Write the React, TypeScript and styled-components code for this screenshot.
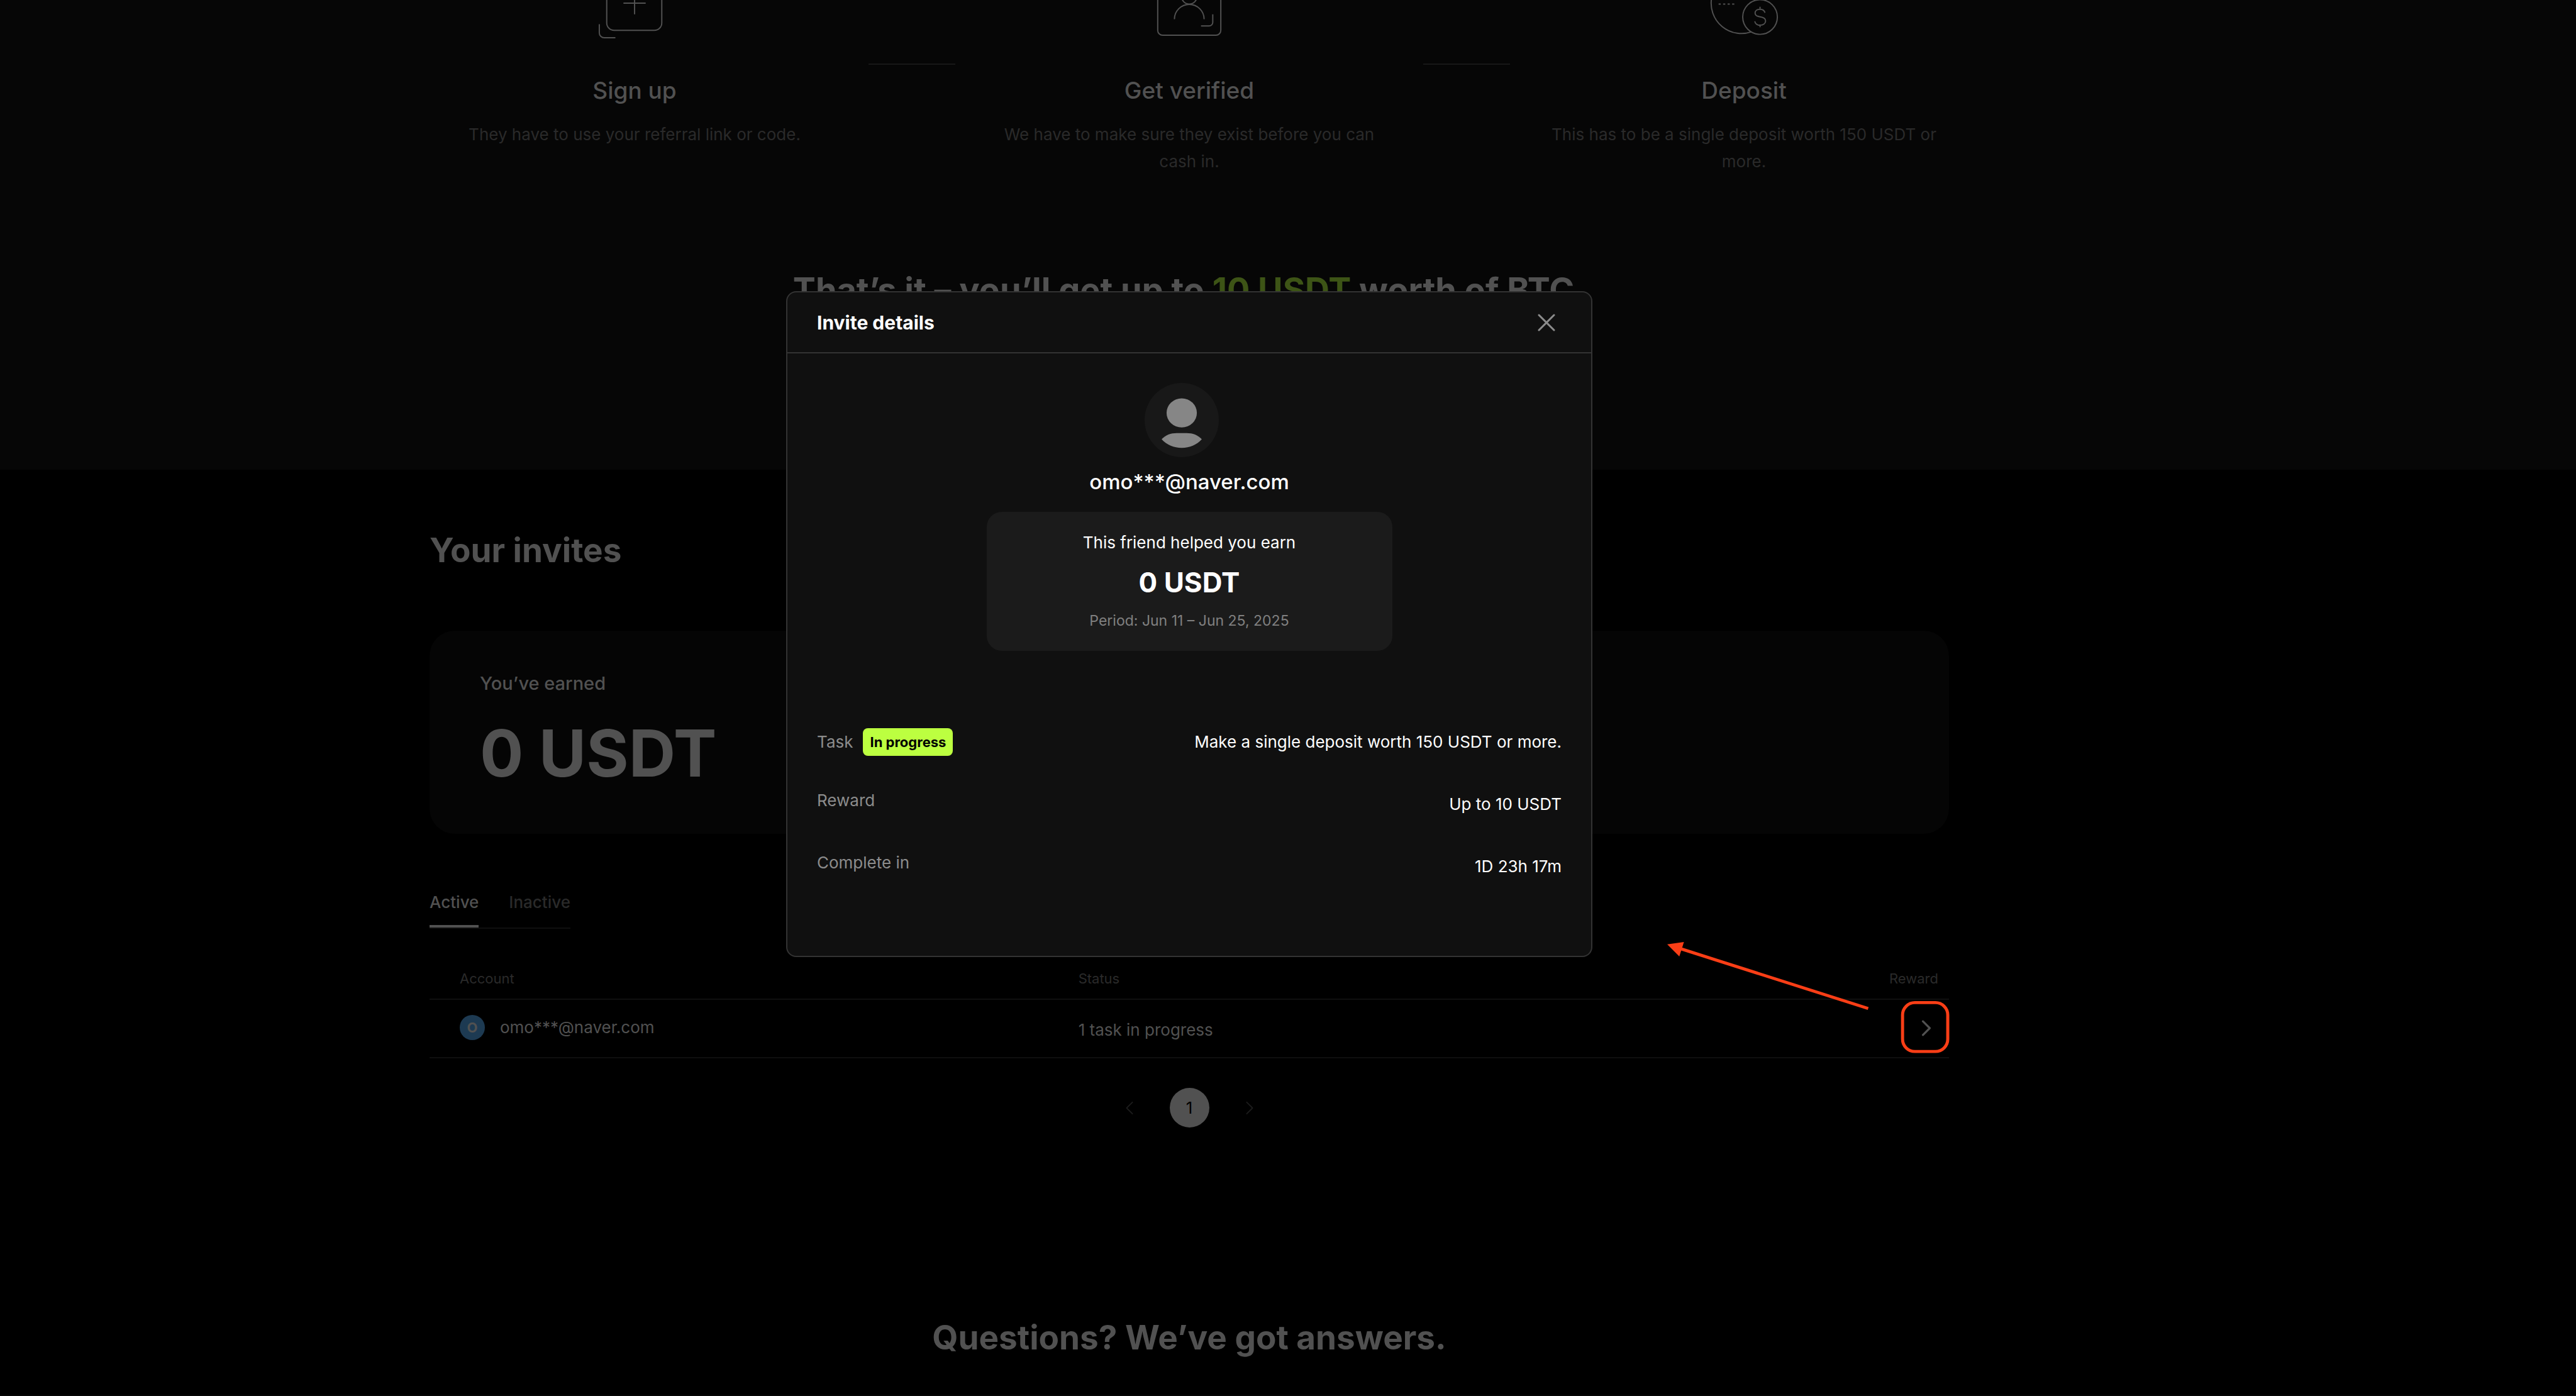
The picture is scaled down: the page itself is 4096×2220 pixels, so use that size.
import React from 'react';
import styled, { createGlobalStyle, css } from 'styled-components';

const color = {
  page: '#000000',
  band: '#060606',
  card: '#050505',
  dimText: '#515151',
  dimMuted: '#2a2a2a',
  dimGreen: '#3d5416',
  line: '#0f0f0f',
  modal: '#101010',
  modalLine: '#333333',
  panel: '#1b1b1b',
  muted: '#8c8c8c',
  lime: '#bcff40',
  mark: '#fa3e16',
};

const GlobalStyle = createGlobalStyle`
  *, *::before, *::after { box-sizing: border-box; }
  body {
    margin: 0;
    background: ${color.page};
    color: ${color.dimText};
    font-family: Inter, "Liberation Sans", sans-serif;
    font-size: 26px;
    line-height: 36px;
  }
  h1, h2, h3, p, dl, dd, dt { margin: 0; font-weight: 400; }
  button { font: inherit; color: inherit; border: 0; background: none; padding: 0; cursor: pointer; }
  svg { display: block; }
`;

const Page = styled.div`
  position: relative;
  min-height: 100vh;
  overflow: hidden;
`;

const gutter = css`
  padding-right: 314px;
`;

const StepsBand = styled.section`
  ${gutter}
  padding-bottom: 254px;
  background: ${color.band};
`;

const Steps = styled.div`
  display: grid;
  grid-template-columns: 744px 138px 744px 138px 744px;
  justify-content: center;
  align-items: start;
  height: 429px;
`;

const Step = styled.article`
  display: flex;
  flex-direction: column;
  align-items: center;
  padding: 0 54px;
  text-align: center;
`;

const StepTitle = styled.h3`
  margin: 56px 0 24px;
  font-size: 37px;
  line-height: 48px;
  font-weight: 500;
`;

const StepText = styled.p`
  line-height: 43px;
  color: ${color.dimMuted};
`;

const Connector = styled.div`
  margin-top: 101px;
  height: 2px;
  background: #171717;
`;

const Heading = styled.h2<{ $center?: boolean; $size?: number }>`
  font-size: ${p => p.$size ?? 53}px;
  line-height: 64px;
  font-weight: 700;
  text-align: ${p => (p.$center ? 'center' : 'left')};
`;

const Accent = styled.span`
  color: ${color.dimGreen};
`;

const InvitesSection = styled.section`
  ${gutter}
  padding-top: 96px;
`;

const Content = styled.div`
  max-width: 2416px;
  margin: 0 auto;
`;

const EarnedCard = styled.div`
  margin-top: 96px;
  padding: 64px 80px 68px;
  border-radius: 40px;
  background: ${color.card};
`;

const EarnedLabel = styled.p`
  font-size: 29px;
  line-height: 40px;
  font-weight: 500;
`;

const EarnedAmount = styled.p`
  margin-top: 31px;
  font-size: 103px;
  line-height: 120px;
  font-weight: 700;
`;

const Tabs = styled.div`
  display: flex;
  gap: 48px;
  width: fit-content;
  margin-top: 91px;
  border-bottom: 2px solid ${color.line};
`;

const Tab = styled.button<{ $active?: boolean }>`
  padding-bottom: 18px;
  border-bottom: 4px solid ${p => (p.$active ? color.dimText : 'transparent')};
  color: ${p => (p.$active ? color.dimText : color.dimMuted)};
  font-weight: 500;
`;

const TableArea = styled.div`
  position: relative;
  margin-top: 63px;
`;

const Table = styled.table`
  width: 100%;
  table-layout: fixed;
  border-collapse: separate;
  border-spacing: 0;
  text-align: left;
`;

const HeadCell = styled.th<{ $width?: string; $right?: boolean }>`
  width: ${p => p.$width ?? 'auto'};
  padding: 0 17px 16px 0;
  border-bottom: 2px solid ${color.line};
  color: ${color.dimMuted};
  font-size: 22px;
  line-height: 32px;
  font-weight: 400;
  text-align: ${p => (p.$right ? 'right' : 'left')};
  &:first-child { padding-left: 48px; }
`;

const Cell = styled.td`
  height: 93px;
  padding: 4px 0 0;
  border-bottom: 2px solid ${color.line};
  &:first-child { padding-left: 48px; }
`;

const Account = styled.div`
  display: flex;
  align-items: center;
  gap: 24px;
  padding-bottom: 8px;
`;

const Initial = styled.span`
  display: grid;
  place-items: center;
  width: 40px;
  height: 40px;
  border-radius: 50%;
  background: #1d3a52;
  font-size: 22px;
  font-weight: 700;
`;

const OpenButton = styled.button`
  display: flex;
  margin: 0 16px 6px auto;
  width: 40px;
  height: 40px;
  align-items: center;
  justify-content: center;
`;

const Callout = styled.svg`
  position: absolute;
  right: -9px;
  bottom: 1px;
  width: 464px;
  height: 192px;
  pointer-events: none;
`;

const Pagination = styled.nav`
  display: flex;
  align-items: center;
  justify-content: center;
  gap: 44px;
  margin: 47px 0 302px;
`;

const PageStep = styled.button`
  display: grid;
  place-items: center;
  width: 40px;
  height: 40px;
  color: #1c1c1c;
`;

const PageNumber = styled.button`
  width: 63px;
  height: 63px;
  border-radius: 50%;
  background: ${color.dimText};
  color: #000;
`;

const FaqBand = styled.div`
  margin-top: 59px;
  height: 2px;
  background: ${color.band};
`;

const Overlay = styled.div`
  ${gutter}
  position: absolute;
  inset: 0;
  display: flex;
  justify-content: center;
  align-items: flex-start;
  padding-top: 463px;
`;

const Modal = styled.section`
  width: 1282px;
  border: 2px solid ${color.modalLine};
  border-radius: 16px;
  background: ${color.modal};
  color: #fff;
`;

const ModalHeader = styled.header`
  display: flex;
  align-items: center;
  justify-content: space-between;
  height: 97px;
  padding: 0 47px;
  border-bottom: 2px solid ${color.modalLine};
`;

const ModalTitle = styled.h2`
  font-size: 30px;
  line-height: 40px;
  font-weight: 700;
`;

const CloseButton = styled.button`
  display: grid;
  place-items: center;
  width: 48px;
  height: 48px;
  color: ${color.muted};
`;

const ModalBody = styled.div`
  display: flex;
  flex-direction: column;
  align-items: center;
  padding: 47px 47px 118px;
`;

const Avatar = styled.svg`
  width: 118px;
  height: 118px;
  margin-right: 24px;
`;

const Email = styled.p`
  margin: 17px 0 26px;
  font-size: 33px;
  line-height: 44px;
  font-weight: 500;
`;

const Summary = styled.div`
  display: flex;
  flex-direction: column;
  align-items: center;
  gap: 17px;
  width: 645px;
  padding: 31px 0 32px;
  border-radius: 24px;
  background: ${color.panel};
`;

const SummaryAmount = styled.p`
  font-size: 44px;
  line-height: 56px;
  font-weight: 700;
`;

const Period = styled.p`
  color: #808080;
  font-size: 23px;
  line-height: 32px;
`;

const Details = styled.dl`
  display: flex;
  flex-direction: column;
  gap: 51px;
  width: 100%;
  margin-top: 121px;
`;

const Detail = styled.div<{ $middle?: boolean }>`
  display: flex;
  justify-content: space-between;
  align-items: ${p => (p.$middle ? 'center' : 'flex-start')};
`;

const DetailLabel = styled.dt`
  display: flex;
  align-items: center;
  gap: 16px;
  color: ${color.muted};
`;

const DetailValue = styled.dd`
  line-height: 48px;
`;

const Tag = styled.span`
  padding: 0 11px;
  border-radius: 8px;
  background: ${color.lime};
  color: #000;
  font-size: 22px;
  line-height: 44px;
  font-weight: 700;
`;

const StepIcon = styled.svg`
  width: 120px;
  height: 64px;
  fill: none;
  stroke: ${color.dimText};
  stroke-width: 2;
`;

const SignUpIcon = () => (
  <StepIcon viewBox="0 0 122 65" aria-hidden="true">
    <path d="M16 -2V37a12 12 0 0 0 12 12H93a12 12 0 0 0 12 -12V-2" />
    <path d="M43 5H79M61 -14V23" />
    <path d="M4 39V53a8 8 0 0 0 8 8H30" />
  </StepIcon>
);

const VerifyIcon = () => (
  <StepIcon viewBox="0 0 122 65" aria-hidden="true">
    <path d="M10 -2V49a8 8 0 0 0 8 8H104a8 8 0 0 0 8 -8V-2" />
    <circle cx="61" cy="-6" r="12.500" />
    <path d="M37 31a24 24 0 0 1 48 0" />
    <path d="M99 23V36a6 6 0 0 1 -6 6H80" />
  </StepIcon>
);

const DepositIcon = () => (
  <StepIcon viewBox="0 0 122 65" aria-hidden="true">
    <path d="M8.500 -2A49 49 0 0 0 73 51.500" />
    <path d="M20 6.500H46" strokeDasharray="3.500 3.800" />
    <circle cx="87" cy="27.500" r="28" />
    <path d="M95 20.500c-1-3.500-4-5.500-8-5.500c-4.500 0-8 2.200-8 6c0 4 3.500 5.500 8 6.200c5 .8 9 2.300 9 6.500c0 4.200-4 7-9 7c-4.500 0-8-2.500-8.500-6.200M87 11V15M87 40V44" />
  </StepIcon>
);

const Chevron = ({ left, size, stroke }: { left?: boolean; size: number; stroke: number }) => (
  <svg width={size} height={size} viewBox="0 0 24 24" fill="none" stroke="currentColor" strokeWidth={stroke} strokeLinecap="round" strokeLinejoin="round" aria-hidden="true">
    <path d={left ? 'M17 2L7 12L17 22' : 'M7 2L17 12L7 22'} />
  </svg>
);

export default function App() {
  return (
    <Page>
      <GlobalStyle />
      <StepsBand>
        <Steps>
          <Step>
            <SignUpIcon />
            <StepTitle>Sign up</StepTitle>
            <StepText>They have to use your referral link or code.</StepText>
          </Step>
          <Connector />
          <Step>
            <VerifyIcon />
            <StepTitle>Get verified</StepTitle>
            <StepText>We have to make sure they exist before you can cash in.</StepText>
          </Step>
          <Connector />
          <Step>
            <DepositIcon />
            <StepTitle>Deposit</StepTitle>
            <StepText>This has to be a single deposit worth 150 USDT or more.</StepText>
          </Step>
        </Steps>
        <Heading $center $size={54}>
          That’s it – you’ll get up to <Accent>10 USDT</Accent> worth of BTC.
        </Heading>
      </StepsBand>

      <InvitesSection>
        <Content>
          <Heading>Your invites</Heading>
          <EarnedCard>
            <EarnedLabel>You’ve earned</EarnedLabel>
            <EarnedAmount>0 USDT</EarnedAmount>
          </EarnedCard>
          <Tabs role="tablist">
            <Tab role="tab" aria-selected="true" $active>Active</Tab>
            <Tab role="tab" aria-selected="false">Inactive</Tab>
          </Tabs>
          <TableArea>
            <Table>
              <thead>
                <tr>
                  <HeadCell $width="42.7%">Account</HeadCell>
                  <HeadCell>Status</HeadCell>
                  <HeadCell $width="20%" $right>Reward</HeadCell>
                </tr>
              </thead>
              <tbody>
                <tr>
                  <Cell>
                    <Account>
                      <Initial>O</Initial>
                      omo***@naver.com
                    </Account>
                  </Cell>
                  <Cell>1 task in progress</Cell>
                  <Cell>
                    <OpenButton aria-label="Open invite details">
                      <Chevron size={26} stroke={3} />
                    </OpenButton>
                  </Cell>
                </tr>
              </tbody>
            </Table>
            <Callout viewBox="0 0 470 195" aria-hidden="true">
              <rect x="386.500" y="106" width="73" height="79" rx="20" fill="none" stroke={color.mark} strokeWidth="5" />
              <path d="M28 19L331 115.500" stroke={color.mark} strokeWidth="5" />
              <path d="M6.500 12L33.500 8L26 31.500Z" fill={color.mark} />
            </Callout>
          </TableArea>
          <Pagination aria-label="Invite pages">
            <PageStep aria-label="Previous page"><Chevron left size={22} stroke={2} /></PageStep>
            <PageNumber aria-current="page">1</PageNumber>
            <PageStep aria-label="Next page"><Chevron size={22} stroke={2} /></PageStep>
          </Pagination>
          <Heading $center>Questions? We’ve got answers.</Heading>
        </Content>
      </InvitesSection>
      <FaqBand />

      <Overlay>
        <Modal role="dialog" aria-labelledby="invite-title">
          <ModalHeader>
            <ModalTitle id="invite-title">Invite details</ModalTitle>
            <CloseButton aria-label="Close">
              <svg width="28" height="28" viewBox="0 0 28 28" stroke="currentColor" strokeWidth="3" strokeLinecap="round" aria-hidden="true">
                <path d="M2 2L26 26M26 2L2 26" />
              </svg>
            </CloseButton>
          </ModalHeader>
          <ModalBody>
            <Avatar viewBox="0 0 120 120" aria-hidden="true">
              <circle cx="60" cy="60" r="60" fill="#181818" />
              <ellipse cx="60" cy="48.500" rx="24.500" ry="23.500" fill="#868686" />
              <path d="M27.500 91C34 84 42 81 52 81H68C78 81 86 84 92.500 91C84 100 73 105 60 105S36 100 27.500 91Z" fill="#868686" />
            </Avatar>
            <Email>omo***@naver.com</Email>
            <Summary>
              <p>This friend helped you earn</p>
              <SummaryAmount>0 USDT</SummaryAmount>
              <Period>Period: Jun 11 – Jun 25, 2025</Period>
            </Summary>
            <Details>
              <Detail $middle>
                <DetailLabel>Task <Tag>In progress</Tag></DetailLabel>
                <DetailValue>Make a single deposit worth 150 USDT or more.</DetailValue>
              </Detail>
              <Detail>
                <DetailLabel>Reward</DetailLabel>
                <DetailValue>Up to 10 USDT</DetailValue>
              </Detail>
              <Detail>
                <DetailLabel>Complete in</DetailLabel>
                <DetailValue>1D 23h 17m</DetailValue>
              </Detail>
            </Details>
          </ModalBody>
        </Modal>
      </Overlay>
    </Page>
  );
}
